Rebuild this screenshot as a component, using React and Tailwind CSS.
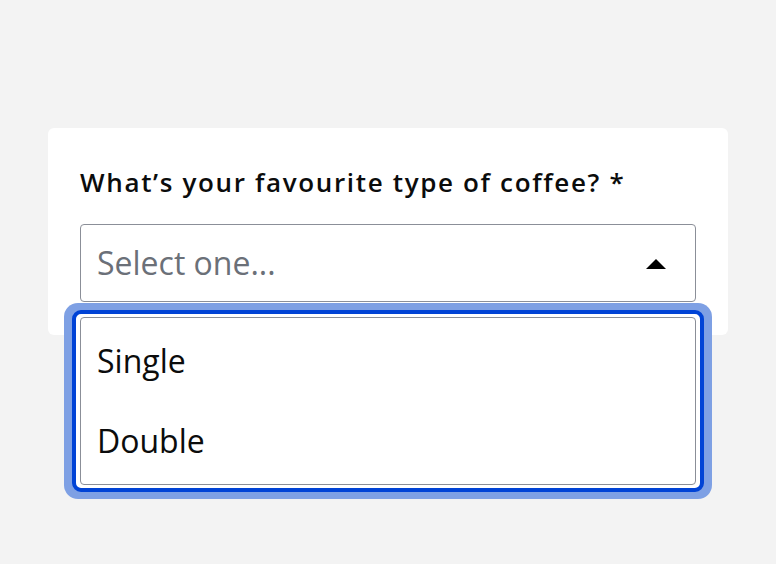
import React from 'react';

const options = ['Single', 'Double'];

const App = () => {
  return (
    <div className="h-[564px] w-[776px] bg-[#f3f3f3] pt-[128px] pl-12 font-['Open_Sans',sans-serif]">
      <div className="w-[680px] rounded-md bg-white px-8 pt-[37px] pb-[33px]">
        <label className="block text-[26px] leading-[34px] font-semibold tracking-[1.65px] text-[#0b0c0c]">
          What’s your favourite type of coffee? *
        </label>
        <div className="relative mt-[25px]">
          <button
            type="button"
            className="flex h-[78px] w-full items-center justify-between rounded-[4px] border border-[#8b8f98] bg-white pl-4 pr-[29px] text-left"
          >
            <span className="text-[32px] text-[#6b7078]">Select one...</span>
            <svg width="20" height="10" viewBox="0 0 20 10" className="mt-[1px]">
              <path d="M10 0 L20 10 L0 10 Z" fill="#000" />
            </svg>
          </button>
          <div className="absolute top-[79px] -right-4 -left-4 rounded-[14px] bg-[#7ea0e4] px-2 py-[7px]">
            <div className="rounded-[9px] border-4 border-[#0043d6] bg-white px-1 py-[3px]">
              <ul className="rounded-[4px] border border-[#8b8f98] py-[3px]">
                {options.map((o) => (
                  <li key={o} className="flex h-20 items-center px-4 text-[32px] text-[#0b0c0c]">
                    {o}
                  </li>
                ))}
              </ul>
            </div>
          </div>
        </div>
      </div>
    </div>
  );
};

export default App;
